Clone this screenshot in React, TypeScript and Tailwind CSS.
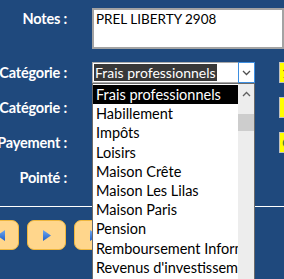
import React from "react";

const items = [
  "Frais professionnels",
  "Habillement",
  "Impôts",
  "Loisirs",
  "Maison Crête",
  "Maison Les Lilas",
  "Maison Paris",
  "Pension",
  "Remboursement Informatique",
  "Revenus d'investissement",
  "Salaire",
];

function Tri({ dir }: { dir: "l" | "r" }) {
  return (
    <svg width="8" height="11" viewBox="0 0 8 11">
      <defs>
        <linearGradient id={"g" + dir} x1="0" y1="0" x2="0" y2="1">
          <stop offset="0" stopColor="#6fa8f0" />
          <stop offset="1" stopColor="#1f5fc8" />
        </linearGradient>
      </defs>
      {dir === "r" ? (
        <polygon points="0,0 8,5.5 0,11" fill={"url(#g" + dir + ")"} />
      ) : (
        <polygon points="8,0 0,5.5 8,11" fill={"url(#g" + dir + ")"} />
      )}
    </svg>
  );
}

function Label({ children }: { children: React.ReactNode }) {
  return (
    <div className="w-[92px] shrink-0 pr-[25px] text-right font-bold text-white text-[14.5px] tracking-[-0.2px] leading-[21px] whitespace-nowrap flex justify-end">
      {children}
    </div>
  );
}

export default function App() {
  return (
    <div
      className="relative w-[284px] h-[279px] overflow-hidden bg-[#1f497d]"
      style={{ fontFamily: "Lato, 'Open Sans', sans-serif" }}
    >
      <div className="flex flex-col pt-[8px]">
        {/* Notes */}
        <div className="flex items-start h-[41px]">
          <Label>Notes :</Label>
          <div className="flex-1 h-[41px] bg-white border-2 border-[#a3a3a3] px-[2px] text-[13.5px] leading-[19px] text-black whitespace-nowrap overflow-hidden">
            PREL LIBERTY 2908
          </div>
        </div>

        {/* Catégorie combo */}
        <div className="flex items-center h-[21px] mt-[13px]">
          <Label>Catégorie :</Label>
          <div className="w-[163px] shrink-0 h-[21px] bg-white border border-[#a8a8a8] flex items-center pl-[1px]">
            <div className="bg-[#383838] text-white text-[14px] leading-[17px] px-[1px] whitespace-nowrap">
              Frais professionnels
            </div>
            <div className="flex-1" />
            <div className="w-[17px] h-[21px] -mr-[1px] border border-[#3d8ee0] bg-white flex items-center justify-center">
              <svg width="9" height="6" viewBox="0 0 9 6">
                <polyline points="1,1 4.5,4.5 8,1" fill="none" stroke="#505050" strokeWidth="1.3" />
              </svg>
            </div>
          </div>
          <div className="ml-[24px] w-[20px] shrink-0 h-[21px] bg-[#ffff00] border border-[#c0c0c0] text-black text-[14px] leading-[19px] pl-[2px]">
            1
          </div>
        </div>

        {/* Catégorie 2 */}
        <div className="flex items-center h-[21px] mt-[14px]">
          <Label>Catégorie :</Label>
          <div className="w-[163px] shrink-0 h-[21px]" />
          <div className="ml-[24px] w-[20px] shrink-0 h-[21px] bg-[#ffff00] border border-[#c0c0c0]" />
        </div>

        {/* Payement */}
        <div className="flex items-center h-[21px] mt-[14px]">
          <Label>Payement :</Label>
          <div className="w-[163px] shrink-0 h-[21px]" />
          <div className="ml-[24px] w-[20px] shrink-0 h-[21px] bg-[#ffff00] border border-[#c0c0c0] text-[#3a8a2a] text-[14px] leading-[19px] pl-[2px]">
            C
          </div>
        </div>

        {/* Pointé */}
        <div className="flex items-center h-[21px] mt-[14px]">
          <Label>Pointé :</Label>
        </div>

        {/* line */}
        <div className="h-[1px] bg-white mt-[18px]" />

        {/* buttons */}
        <div className="flex gap-[8px] ml-[-20px] mt-[13px]">
          <div className="w-[39px] shrink-0 h-[30px] rounded-[7px] bg-[#ffd68c] border border-[#efb73e] flex items-center justify-center pl-[3px]">
            <Tri dir="l" />
          </div>
          <div className="w-[39px] shrink-0 h-[30px] rounded-[7px] bg-[#ffd68c] border border-[#efb73e] flex items-center justify-center">
            <Tri dir="r" />
          </div>
          <div className="w-[39px] shrink-0 h-[30px] rounded-[7px] bg-[#ffd68c] border border-[#efb73e] flex items-center justify-center">
            <Tri dir="r" />
          </div>
        </div>
      </div>

      {/* dropdown list overlay */}
      <div className="absolute left-[92px] top-[83px] w-[163px] h-[210px] bg-white border border-[#6b6b6b] flex">
        <div className="flex-1 overflow-hidden pt-[1px]">
          {items.map((it, i) => (
            <div
              key={it}
              className={
                "h-[19.2px] leading-[19px] text-[14.5px] pl-[3px] whitespace-nowrap " +
                (i === 0 ? "bg-black text-white" : "text-black")
              }
            >
              {it}
            </div>
          ))}
        </div>
        <div className="w-[16px] shrink-0 bg-[#ededed] flex flex-col items-center">
          <div className="h-[19px] flex items-center justify-center">
            <svg width="9" height="6" viewBox="0 0 9 6">
              <polyline points="1,5 4.5,1.5 8,5" fill="none" stroke="#606060" strokeWidth="1.3" />
            </svg>
          </div>
          <div className="w-[16px] h-[17px] bg-[#cdcdcd] mt-[11px]" />
        </div>
      </div>
    </div>
  );
}
